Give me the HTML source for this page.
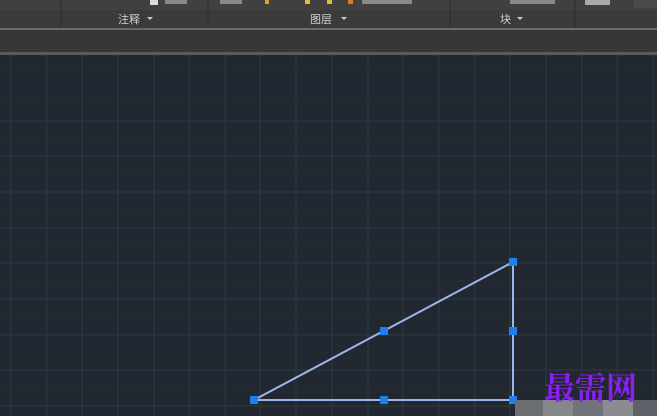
<!DOCTYPE html>
<html><head><meta charset="utf-8"><style>
html,body{margin:0;padding:0;width:657px;height:416px;overflow:hidden;background:#222831;font-family:"Liberation Sans","Noto Sans CJK SC",sans-serif}
</style></head><body>
<svg width="657" height="416" xmlns="http://www.w3.org/2000/svg" style="position:absolute;left:0;top:0">
<rect x="0" y="0" width="657" height="28" fill="#3b3b3c"/>
<rect x="0" y="0" width="657" height="10" fill="#404041"/>
<g stroke="#2e2e2e" stroke-width="1">
<line x1="61" y1="0" x2="61" y2="28"/><line x1="208" y1="0" x2="208" y2="28"/>
<line x1="450" y1="0" x2="450" y2="28"/><line x1="575" y1="0" x2="575" y2="28"/>
</g>
<rect x="150" y="0" width="8" height="5" fill="#ddd"/>
<rect x="165" y="0" width="22" height="4" fill="#888"/>
<rect x="220" y="0" width="22" height="4" fill="#888"/>
<rect x="265" y="0" width="4" height="4" fill="#d9a030"/>
<rect x="305" y="0" width="5" height="4" fill="#e0c030"/>
<rect x="327" y="0" width="5" height="4" fill="#e0c030"/>
<rect x="348" y="0" width="5" height="4" fill="#d08020"/>
<rect x="362" y="0" width="50" height="4" fill="#8a8a8a"/>
<rect x="510" y="0" width="45" height="4" fill="#888"/>
<rect x="585" y="0" width="25" height="5" fill="#aaa"/>
<rect x="634" y="0" width="23" height="8" fill="#4a4a4a"/>
<text x="118" y="23" font-size="11" fill="#d0d0d0">注释</text>
<path d="M147 17 l6 0 l-3 3z" fill="#d0d0d0"/>
<text x="310" y="23" font-size="11" fill="#d0d0d0">图层</text>
<path d="M341 17 l6 0 l-3 3z" fill="#d0d0d0"/>
<text x="500" y="23" font-size="11" fill="#d0d0d0">块</text>
<path d="M517 17 l6 0 l-3 3z" fill="#d0d0d0"/>
<rect x="0" y="28" width="657" height="2" fill="#6a6a6a"/>
<rect x="0" y="30" width="657" height="22" fill="#373737"/>
<rect x="0" y="52" width="657" height="3" fill="#5a5a5a"/>
<rect x="0" y="55" width="657" height="361" fill="#222831"/>
<g stroke="#242b34" stroke-width="1">
<line x1="0" y1="67" x2="657" y2="67"/><line x1="0" y1="103" x2="657" y2="103"/><line x1="0" y1="138" x2="657" y2="138"/><line x1="0" y1="174" x2="657" y2="174"/><line x1="0" y1="210" x2="657" y2="210"/><line x1="0" y1="245" x2="657" y2="245"/><line x1="0" y1="281" x2="657" y2="281"/><line x1="0" y1="317" x2="657" y2="317"/><line x1="0" y1="352" x2="657" y2="352"/><line x1="0" y1="388" x2="657" y2="388"/>
</g>
<g stroke="#2f3742" stroke-width="1">
<line x1="0" y1="121" x2="657" y2="121"/><line x1="0" y1="156" x2="657" y2="156"/><line x1="0" y1="192" x2="657" y2="192"/><line x1="0" y1="228" x2="657" y2="228"/><line x1="0" y1="263" x2="657" y2="263"/><line x1="0" y1="299" x2="657" y2="299"/><line x1="0" y1="335" x2="657" y2="335"/><line x1="0" y1="370" x2="657" y2="370"/><line x1="0" y1="406" x2="657" y2="406"/>
<line x1="11" y1="55" x2="11" y2="416"/><line x1="47" y1="55" x2="47" y2="416"/><line x1="82" y1="55" x2="82" y2="416"/><line x1="118" y1="55" x2="118" y2="416"/><line x1="154" y1="55" x2="154" y2="416"/><line x1="189" y1="55" x2="189" y2="416"/><line x1="225" y1="55" x2="225" y2="416"/><line x1="260" y1="55" x2="260" y2="416"/><line x1="296" y1="55" x2="296" y2="416"/><line x1="332" y1="55" x2="332" y2="416"/><line x1="368" y1="55" x2="368" y2="416"/><line x1="403" y1="55" x2="403" y2="416"/><line x1="439" y1="55" x2="439" y2="416"/><line x1="475" y1="55" x2="475" y2="416"/><line x1="510" y1="55" x2="510" y2="416"/><line x1="546" y1="55" x2="546" y2="416"/><line x1="582" y1="55" x2="582" y2="416"/><line x1="617" y1="55" x2="617" y2="416"/><line x1="653" y1="55" x2="653" y2="416"/>
</g>
<g stroke="#9db8e8" stroke-width="2" fill="none">
<path d="M254 400 L513 262 L513 400 Z"/>
</g>
<g fill="#1e7ff0">
<rect x="250" y="396" width="8" height="8"/><rect x="509" y="258" width="8" height="8"/><rect x="509" y="396" width="8" height="8"/>
<rect x="380" y="327" width="8" height="8"/><rect x="509" y="327" width="8" height="8"/><rect x="380" y="396" width="8" height="8"/>
</g>
<rect x="515" y="400" width="28" height="16" fill="#6a6d72"/>
<rect x="543" y="400" width="30" height="16" fill="#85878b"/>
<rect x="573" y="400" width="30" height="16" fill="#70737a"/>
<rect x="603" y="400" width="30" height="16" fill="#8a8c90"/>
<rect x="633" y="400" width="24" height="16" fill="#5e6168"/>
<text x="544" y="399" font-size="31" font-family="'Noto Serif CJK SC',serif" font-weight="bold" fill="#8a1ff0">最需网</text>
</svg>
</body></html>
